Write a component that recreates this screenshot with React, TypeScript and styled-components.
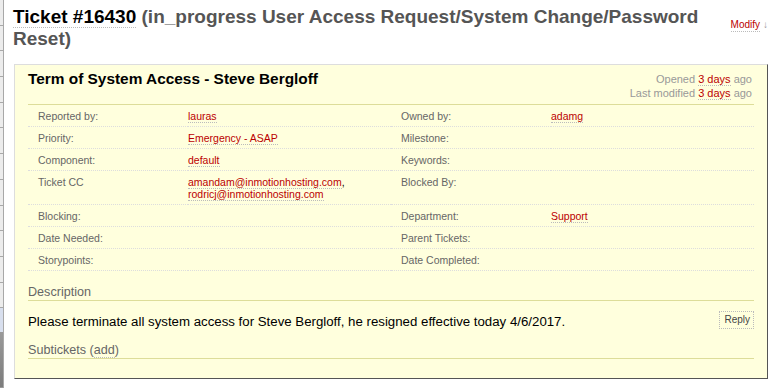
import React from 'react';
import styled, { createGlobalStyle } from 'styled-components';

const GlobalStyle = createGlobalStyle`
  html, body {
    margin: 0;
    padding: 0;
    background: #fff;
    font-family: "Liberation Sans", Arial, sans-serif;
    font-size: 13px;
    color: #000;
  }
`;

const Page = styled.div`
  display: flex;
  width: 783px;
  height: 388px;
  overflow: hidden;
`;

const Rail = styled.div`
  width: 3px;
  flex: none;
  display: flex;
  flex-direction: column;
  background: #ececec;
  border-right: 1px solid #a8a8a8;
`;

const RailItem = styled.div<{ $tone?: 'blue' | 'dark' }>`
  height: ${p => (p.$tone === 'dark' ? 'auto' : p.$tone === 'blue' ? '24px' : '25.7px')};
  flex: ${p => (p.$tone === 'dark' ? '1' : 'none')};
  border-bottom: 1px solid ${p => (p.$tone ? 'transparent' : '#a8a8a8')};
  background: ${p =>
    p.$tone === 'blue' ? '#d8dfee' : p.$tone === 'dark' ? 'linear-gradient(#9a9a9a, #7c7c7c)' : 'transparent'};
  box-sizing: border-box;
`;

const Main = styled.div`
  flex: 1;
  min-width: 0;
  padding: 6px 15px 0 9px;
`;

const Header = styled.div`
  display: flex;
  align-items: flex-start;
  justify-content: space-between;
`;

const Title = styled.h1`
  flex: 1;
  min-width: 0;
  margin: 0;
  font-size: 19px;
  line-height: 22px;
  font-weight: bold;
  color: #555;
`;

const TicketNo = styled.a`
  color: #000;
  text-decoration: none;
  border-bottom: 1px dotted #bbb;
`;

const Modify = styled.div`
  flex: none;
  margin: 13px 0 0 12px;
  font-size: 10px;
  line-height: 12px;
  white-space: nowrap;
  display: flex;
  align-items: baseline;
  gap: 3px;
`;

const Arrow = styled.span`
  font-size: 10px;
  color: #999;
`;

const Box = styled.div`
  margin-top: 14px;
  margin-left: 1px;
  background: #ffd;
  border: 1px solid;
  border-color: #ddd #555 #555 #ddd;
  padding: 2px 13px 19px 13px;
`;

const BoxHead = styled.div`
  display: flex;
  justify-content: space-between;
  align-items: flex-start;
`;

const Summary = styled.h2`
  margin: 0;
  padding-top: 2px;
  font-size: 15.4px;
  line-height: 19px;
  font-weight: bold;
  color: #000;
`;

const Dates = styled.div`
  text-align: right;
  font-size: 11px;
  line-height: 14px;
  color: #999;
  padding: 5px 2px 0 0;
`;

const Link = styled.a`
  color: #b00;
  text-decoration: none;
  border-bottom: 1px dotted #bbb;
`;

const Props = styled.div`
  margin-top: 4px;
  border-top: 1px solid #dd9;
  display: grid;
  grid-template-columns: 160px 203px 160px 1fr;
  font-size: 10.5px;
`;

const Cell = styled.div<{ $label?: boolean; $tall?: boolean }>`
  height: ${p => (p.$tall ? '34px' : '22px')};
  padding: 5px 0 0 ${p => (p.$label ? '10px' : '0')};
  box-sizing: border-box;
  line-height: 12px;
  border-bottom: 1px dotted #ddd;
  color: ${p => (p.$label ? '#666' : '#000')};
`;

const Section = styled.h3`
  margin: 14px 0 0;
  font-size: 12.6px;
  font-weight: normal;
  line-height: 15px;
  color: #666;
  border-bottom: 1px solid #dd9;
`;

const Plain = styled.span`
  color: #666;
  border-bottom: 1px dotted #bbb;
`;

const Desc = styled.div`
  display: flex;
  justify-content: space-between;
  align-items: flex-start;
  padding-top: 10px;
  line-height: 15px;
`;

const DescText = styled.p`
  margin: 3px 0 0;
  font-size: 13.25px;
`;

const Reply = styled.button`
  font-family: "Liberation Sans", Arial, sans-serif;
  font-size: 10px;
  line-height: 12px;
  color: #444;
  background: transparent;
  border: 1px dotted #bbb;
  padding: 2px 3px 2px 4px;
  margin-top: 0;
`;

const rows: [string, React.ReactNode, string, React.ReactNode][] = [
  ['Reported by:', <Link>lauras</Link>, 'Owned by:', <Link>adamg</Link>],
  ['Priority:', <Link>Emergency - ASAP</Link>, 'Milestone:', null],
  ['Component:', <Link>default</Link>, 'Keywords:', null],
  [
    'Ticket CC',
    <>
      <Link>amandam@inmotionhosting.com</Link>,<br />
      <Link>rodricj@inmotionhosting.com</Link>
    </>,
    'Blocked By:',
    null,
  ],
  ['Blocking:', null, 'Department:', <Link>Support</Link>],
  ['Date Needed:', null, 'Parent Tickets:', null],
  ['Storypoints:', null, 'Date Completed:', null],
];

export default function App() {
  return (
    <Page>
      <GlobalStyle />
      <Rail>
        {Array.from({ length: 12 }).map((_, i) => (
          <RailItem key={i} />
        ))}
        <RailItem $tone="blue" />
        <RailItem $tone="dark" />
      </Rail>
      <Main>
        <Header>
          <Title>
            <TicketNo>Ticket #16430</TicketNo> (in_progress User Access Request/System Change/Password Reset)
          </Title>
          <Modify>
            <Link>Modify</Link>
            <Arrow>↓</Arrow>
          </Modify>
        </Header>
        <Box>
          <BoxHead>
            <Summary>Term of System Access - Steve Bergloff</Summary>
            <Dates>
              Opened <Link>3 days</Link> ago
              <br />
              Last modified <Link>3 days</Link> ago
            </Dates>
          </BoxHead>
          <Props>
            {rows.map(([l1, v1, l2, v2]) => {
              const tall = l1 === 'Ticket CC';
              return (
                <React.Fragment key={l1}>
                  <Cell $label $tall={tall}>{l1}</Cell>
                  <Cell $tall={tall}>{v1}</Cell>
                  <Cell $label $tall={tall}>{l2}</Cell>
                  <Cell $tall={tall}>{v2}</Cell>
                </React.Fragment>
              );
            })}
          </Props>
          <Section>Description</Section>
          <Desc>
            <DescText>
              Please terminate all system access for Steve Bergloff, he resigned effective today 4/6/2017.
            </DescText>
            <Reply>Reply</Reply>
          </Desc>
          <Section>
            Subtickets (<Plain>add</Plain>)
          </Section>
        </Box>
      </Main>
    </Page>
  );
}
